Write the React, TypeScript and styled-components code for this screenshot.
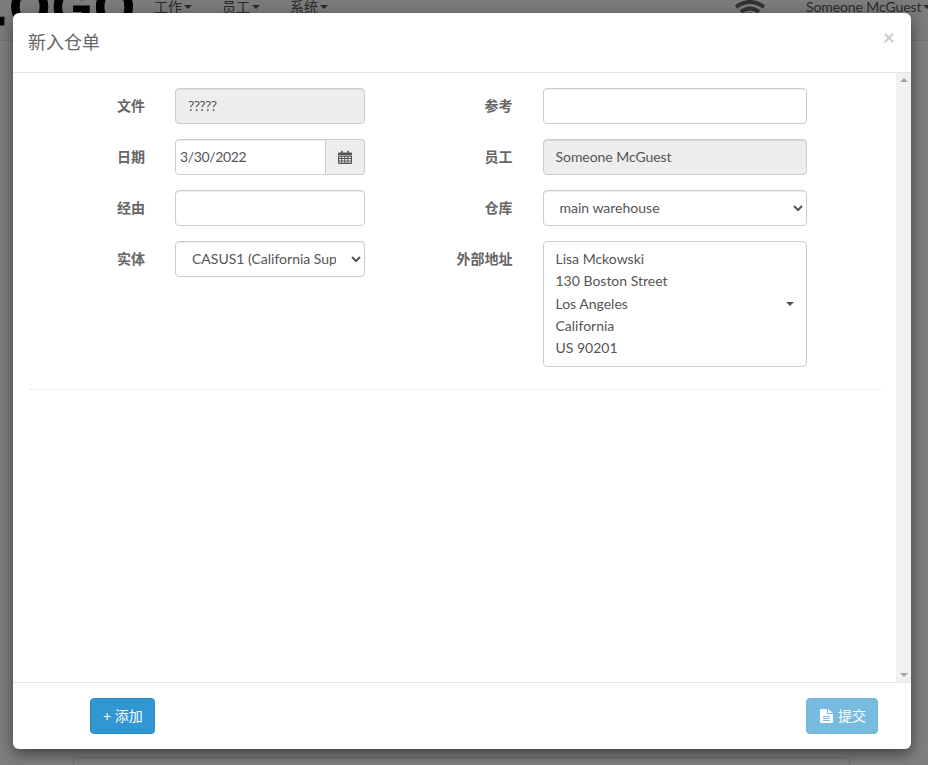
import React from "react";
import styled, { createGlobalStyle } from "styled-components";

const GlobalStyle = createGlobalStyle`
  html, body {
    margin: 0;
    height: 100%;
    overflow: hidden;
    background: #fff;
    font-family: Lato, "Noto Sans CJK SC", sans-serif;
    font-size: 14px;
    color: #555;
  }
  * {
    box-sizing: border-box;
  }
`;

const Page = styled.div`
  position: relative;
  width: 928px;
  height: 765px;
  overflow: hidden;
`;

const Navbar = styled.div`
  height: 41px;
  display: flex;
  align-items: flex-start;
  background: #f8f8f8;
  border-bottom: 1px solid #e7e7e7;
  overflow: hidden;
`;

const Logo = styled.div`
  width: 161px;
  flex: none;
  margin-top: -18px;
  margin-left: -7px;
  font-family: "Liberation Sans", sans-serif;
  font-size: 52px;
  font-weight: 700;
  line-height: 50px;
  color: #000;
  letter-spacing: 2px;
  -webkit-text-stroke: 1px #000;
`;

const NavItem = styled.div`
  display: flex;
  align-items: center;
  gap: 2px;
  width: 68px;
  margin-top: -3px;
  font-size: 14px;
  line-height: 20px;
  color: #555;
`;

const Caret = styled.span`
  display: inline-block;
  flex: none;
  width: 0;
  height: 0;
  border-top: 4px solid #555;
  border-left: 4px solid transparent;
  border-right: 4px solid transparent;
`;

const NavRight = styled.div`
  margin-left: auto;
  display: flex;
  align-items: flex-start;
`;

const Wifi = styled.svg`
  width: 30px;
  height: 16px;
  margin-right: 41px;
  display: block;
`;

const UserItem = styled(NavItem)`
  width: 122px;
  white-space: nowrap;
  letter-spacing: -0.1px;
`;

const Content = styled.div`
  height: 30px;
  margin: 716px 0 0 73px;
  width: 777px;
  background: #fff;
  border: 1px solid #ddd;
  border-radius: 4px;
`;

const Backdrop = styled.div`
  position: absolute;
  inset: 0;
  background: rgba(0, 0, 0, 0.5);
`;

const Modal = styled.div`
  position: absolute;
  left: 13px;
  top: 13px;
  width: 898px;
  height: 736px;
  display: flex;
  flex-direction: column;
  background: #fff;
  border-radius: 6px;
  box-shadow: 0 5px 15px rgba(0, 0, 0, 0.5);
`;

const Header = styled.div`
  height: 60px;
  flex: none;
  display: flex;
  justify-content: space-between;
  padding: 15px;
  border-bottom: 1px solid #e5e5e5;
`;

const Title = styled.h4`
  margin: 0;
  font-size: 18px;
  font-weight: 400;
  line-height: 28px;
  color: #666;
`;

const Close = styled.span`
  margin: -5px 1px 0 0;
  font-size: 21px;
  font-weight: 700;
  line-height: 28px;
  color: #ccc;
`;

const Body = styled.div`
  flex: 1;
  display: flex;
  min-height: 0;
`;

const Main = styled.div`
  flex: 1;
  padding: 15px;
`;

const Columns = styled.div`
  display: flex;
  padding-bottom: 22px;
  border-bottom: 1px solid #eee;
`;

const Col = styled.div<{ $width: number; $pad: number }>`
  width: ${(p) => p.$width}px;
  padding-left: ${(p) => p.$pad}px;
  display: flex;
  flex-direction: column;
  gap: 15px;
`;

const Row = styled.div<{ $labelWidth: number; $fieldWidth: number }>`
  display: grid;
  grid-template-columns: ${(p) => p.$labelWidth}px ${(p) => p.$fieldWidth}px;
  column-gap: 30px;
  align-items: start;
`;

const Label = styled.label`
  padding-top: 8px;
  font-weight: 700;
  font-size: 14px;
  line-height: 20px;
  text-align: right;
  white-space: nowrap;
  color: #666;
`;

const Field = styled.div<{ $readonly?: boolean; $tight?: number }>`
  height: 36px;
  padding: 7px 12px;
  font-size: 14px;
  line-height: 20px;
  letter-spacing: ${(p) => p.$tight ?? -0.05}px;
  color: #555;
  background: ${(p) => (p.$readonly ? "#eee" : "#fff")};
  border: 1px solid #ccc;
  border-radius: 4px;
  box-shadow: inset 0 1px 1px rgba(0, 0, 0, 0.075);
`;

const InputGroup = styled.div`
  display: flex;
  height: 36px;
`;

const DateField = styled(Field)`
  flex: 1;
  padding-left: 4px;
  border-radius: 4px 0 0 4px;
`;

const Addon = styled.span`
  width: 39px;
  display: flex;
  align-items: center;
  justify-content: center;
  background: #eee;
  border: 1px solid #ccc;
  border-left: none;
  border-radius: 0 4px 4px 0;
`;

const Select = styled.select`
  width: 100%;
  height: 36px;
  padding: 5px 12px 7px;
  font: inherit;
  color: #555;
  background: #fff;
  border: 1px solid #ccc;
  border-radius: 4px;
  box-shadow: inset 0 1px 1px rgba(0, 0, 0, 0.075);
`;

const AddressBox = styled.div`
  display: flex;
  align-items: center;
  justify-content: space-between;
  height: 126px;
  padding: 6px 12px;
  border: 1px solid #ccc;
  border-radius: 4px;
`;

const AddressLines = styled.div`
  align-self: flex-start;
  line-height: 22.3px;
  font-size: 14px;
  color: #555;
`;

const Scrollbar = styled.div`
  width: 15px;
  flex: none;
  display: flex;
  flex-direction: column;
  justify-content: space-between;
  align-items: center;
  padding: 5px 0;
  background: #f1f1f1;
`;

const Arrow = styled.span<{ $down?: boolean }>`
  width: 0;
  height: 0;
  border-left: 4px solid transparent;
  border-right: 4px solid transparent;
  border-bottom: ${(p) => (p.$down ? "none" : "4px solid #a3a3a3")};
  border-top: ${(p) => (p.$down ? "4px solid #a3a3a3" : "none")};
`;

const Footer = styled.div`
  height: 67px;
  flex: none;
  display: flex;
  justify-content: space-between;
  padding: 15px 33px 15px 77px;
  border-top: 1px solid #e5e5e5;
`;

const Button = styled.button`
  height: 36px;
  display: flex;
  align-items: center;
  padding: 6px 12px;
  font: inherit;
  line-height: 20px;
  white-space: nowrap;
  color: #fff;
  background: #3097d1;
  border: 1px solid #2a88bd;
  border-radius: 4px;
`;

const AddButton = styled(Button)`
  width: 65px;
`;

const SubmitButton = styled(Button)`
  gap: 5px;
  padding: 6px 11px 6px 13px;
  opacity: 0.65;
`;

const CalendarIcon = () => (
  <svg width="14" height="14" viewBox="0 0 14 14" fill="#555">
    <path d="M0 3.5a1 1 0 0 1 1-1h12a1 1 0 0 1 1 1V5H0z" />
    <rect x="3" y="0.8" width="1.6" height="2.6" rx="0.5" />
    <rect x="9.4" y="0.8" width="1.6" height="2.6" rx="0.5" />
    <path
      fillRule="evenodd"
      d="M0 5.6h14V13a1 1 0 0 1-1 1H1a1 1 0 0 1-1-1zM1.2 6.8v1.3h2V6.8zm3 0v1.3h2.1V6.8zm3.1 0v1.3h2.1V6.8zm3.1 0v1.3h2.4V6.8zM1.2 9.1v1.3h2V9.1zm3 0v1.3h2.1V9.1zm3.1 0v1.3h2.1V9.1zm3.1 0v1.3h2.4V9.1zM1.2 11.4v1.3h2v-1.3zm3 0v1.3h2.1v-1.3zm3.1 0v1.3h2.1v-1.3zm3.1 0v1.3h2.4v-1.3z"
    />
  </svg>
);

const FileIcon = () => (
  <svg width="13" height="14" viewBox="0 0 13 14" fill="#fff">
    <path
      fillRule="evenodd"
      d="M0 .8C0 .4.4 0 .8 0H7v4.2c0 .5.4.8.8.8H13v8.2c0 .4-.4.8-.8.8H.8c-.4 0-.8-.4-.8-.8zM3 7v1h7V7zm0 2v1h7V9zm0 2v1h7v-1z"
    />
    <path d="M8 0l5 4H8z" />
  </svg>
);

const App = () => {
  return (
    <>
      <GlobalStyle />
      <Page>
        <Navbar>
          <Logo>.OGO</Logo>
          <NavItem>工作<Caret /></NavItem>
          <NavItem>员工<Caret /></NavItem>
          <NavItem>系统<Caret /></NavItem>
          <NavRight>
            <Wifi viewBox="0 0 30 16" fill="none" stroke="#666" strokeWidth="4">
              <path d="M1 7 Q15 -3 29 7" />
              <path d="M6 12 Q15 5 24 12" />
              <path d="M11 16 Q15 13 19 16" />
            </Wifi>
            <UserItem>Someone McGuest<Caret /></UserItem>
          </NavRight>
        </Navbar>
        <Content />
        <Backdrop />
        <Modal>
          <Header>
            <Title>新入仓单</Title>
            <Close>×</Close>
          </Header>
          <Body>
            <Main>
              <Columns>
                <Col $width={428.5} $pad={75}>
                  <Row $labelWidth={42} $fieldWidth={190}>
                    <Label>文件</Label>
                    <Field $readonly $tight={-0.6}>?????</Field>
                  </Row>
                  <Row $labelWidth={42} $fieldWidth={190}>
                    <Label>日期</Label>
                    <InputGroup>
                      <DateField $tight={-0.35}>3/30/2022</DateField>
                      <Addon><CalendarIcon /></Addon>
                    </InputGroup>
                  </Row>
                  <Row $labelWidth={42} $fieldWidth={190}>
                    <Label>经由</Label>
                    <Field />
                  </Row>
                  <Row $labelWidth={42} $fieldWidth={190}>
                    <Label>实体</Label>
                    <Select defaultValue="casus1">
                      <option value="casus1">CASUS1 (California Supply)</option>
                    </Select>
                  </Row>
                </Col>
                <Col $width={423} $pad={0}>
                  <Row $labelWidth={56} $fieldWidth={264}>
                    <Label>参考</Label>
                    <Field />
                  </Row>
                  <Row $labelWidth={56} $fieldWidth={264}>
                    <Label>员工</Label>
                    <Field $readonly>Someone McGuest</Field>
                  </Row>
                  <Row $labelWidth={56} $fieldWidth={264}>
                    <Label>仓库</Label>
                    <Select defaultValue="main">
                      <option value="main">main warehouse</option>
                    </Select>
                  </Row>
                  <Row $labelWidth={56} $fieldWidth={264}>
                    <Label>外部地址</Label>
                    <AddressBox>
                      <AddressLines>
                        Lisa Mckowski<br />
                        130 Boston Street<br />
                        Los Angeles<br />
                        California<br />
                        US 90201
                      </AddressLines>
                      <Caret />
                    </AddressBox>
                  </Row>
                </Col>
              </Columns>
            </Main>
            <Scrollbar>
              <Arrow />
              <Arrow $down />
            </Scrollbar>
          </Body>
          <Footer>
            <AddButton>+ 添加</AddButton>
            <SubmitButton><FileIcon />提交</SubmitButton>
          </Footer>
        </Modal>
      </Page>
    </>
  );
};

export default App;
